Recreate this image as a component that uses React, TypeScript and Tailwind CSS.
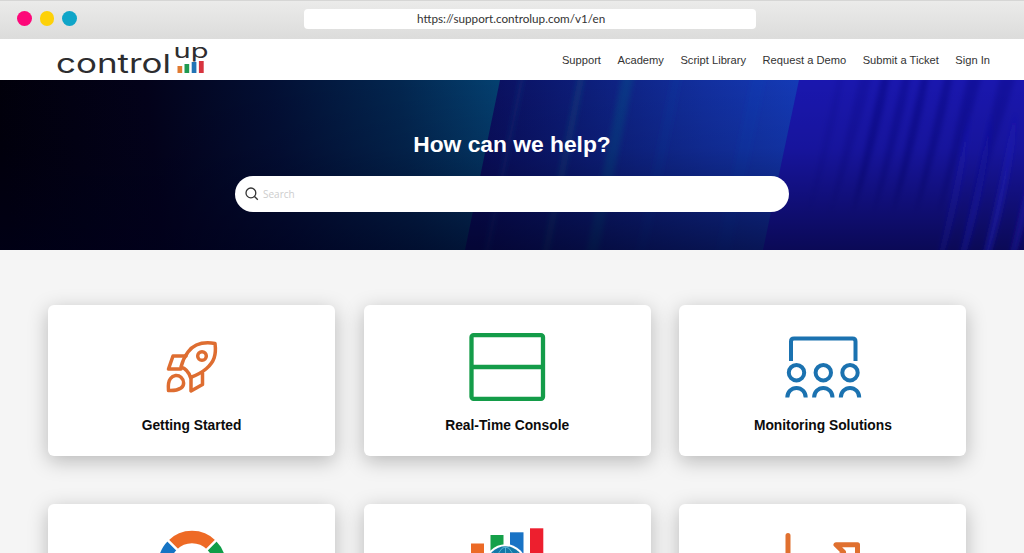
import type { ReactNode } from 'react'

const navLinks = ['Support', 'Academy', 'Script Library', 'Request a Demo', 'Submit a Ticket', 'Sign In']

const streaks = [
  { x: 520, w: 5, color: '#1c4a90', opacity: 0.2 },
  { x: 578, w: 7, color: '#146080', opacity: 0.28 },
  { x: 622, w: 12, color: '#126488', opacity: 0.28 },
  { x: 672, w: 10, color: '#1a48b0', opacity: 0.12 },
  { x: 752, w: 14, color: '#1c4cc4', opacity: 0.12 },
]

// dark folds hang from the top, light ones show in the lower right corner
const folds = [
  { x: 838, w: 6, o: 0.12 },
  { x: 860, w: 12, o: 0.18 },
  { x: 882, w: 8, o: 0.4 },
  { x: 903, w: 8, o: 0.3 },
  { x: 922, w: 7, o: 0.4 },
  { x: 945, w: 8, o: 0.35 },
  { x: 968, w: 14, o: 0.3 },
  { x: 1000, w: 16, o: 0.25 },
]

const highlights = [
  { x: 966, w: 5, o: 0.25 },
  { x: 988, w: 6, o: 0.35 },
  { x: 1012, w: 6, o: 0.5 },
  { x: 1038, w: 6, o: 0.4 },
]

function Logo() {
  return (
    <svg className="overflow-visible" width="156" height="41" viewBox="54 39 156 41" role="img" aria-label="ControlUp">
      <g fill="#2d2d2f" fontFamily="Inter, sans-serif">
        <text x="56" y="72.500" fontSize="26" textLength="115" lengthAdjust="spacingAndGlyphs">control</text>
        <text x="173.500" y="57.500" fontSize="18.500" textLength="35" lengthAdjust="spacingAndGlyphs">up</text>
      </g>
      <rect x="177.500" y="66" width="4.700" height="7" fill="#e07b32" />
      <rect x="184.500" y="64" width="4.700" height="9" fill="#1f9a50" />
      <rect x="191.700" y="62" width="4.700" height="11" fill="#2274b5" />
      <rect x="198.900" y="61" width="4.800" height="12" fill="#d8343f" />
    </svg>
  )
}

function HeroBackground() {
  return (
    <svg className="absolute inset-0 h-full w-full" viewBox="0 0 1024 170" preserveAspectRatio="none" aria-hidden="true">
      <defs>
        <linearGradient id="left" gradientUnits="userSpaceOnUse" x1="0" y1="60" x2="500" y2="0">
          <stop offset="0" stopColor="#01000a" />
          <stop offset="0.3" stopColor="#03021a" />
          <stop offset="0.55" stopColor="#030f34" />
          <stop offset="0.8" stopColor="#03264f" />
          <stop offset="1" stopColor="#044070" />
        </linearGradient>
        <linearGradient id="middle" gradientUnits="userSpaceOnUse" x1="480" y1="0" x2="800" y2="0">
          <stop offset="0" stopColor="#0a0e5c" />
          <stop offset="0.35" stopColor="#0d1f7c" />
          <stop offset="0.7" stopColor="#122f9e" />
          <stop offset="1" stopColor="#143ab6" />
        </linearGradient>
        <linearGradient id="shade" x1="0" y1="0" x2="0" y2="1">
          <stop offset="0" stopColor="#00001c" stopOpacity="0" />
          <stop offset="0.4" stopColor="#00001c" stopOpacity="0.12" />
          <stop offset="1" stopColor="#00001c" stopOpacity="0.6" />
        </linearGradient>
        <filter id="soft" x="-10%" y="-10%" width="120%" height="120%">
          <feGaussianBlur stdDeviation="2.500" />
        </filter>
        <clipPath id="right">
          <polygon points="799,0 1024,0 1024,170 763,170" />
        </clipPath>
      </defs>
      <rect width="1024" height="170" fill="url(#left)" />
      <polygon points="500,0 800,0 764,170 465,170" fill="url(#middle)" />
      <g filter="url(#soft)">
        {streaks.map((s) => (
          <polygon
            key={s.x}
            points={`${s.x},-4 ${s.x + s.w},-4 ${s.x + s.w - 36},174 ${s.x - 36},174`}
            fill={s.color}
            opacity={s.opacity}
          />
        ))}
      </g>
      <polygon points="799,0 1024,0 1024,170 763,170" fill="#1a17ae" />
      <g clipPath="url(#right)">
        <g filter="url(#soft)">
          {folds.map((f) => (
            <path
              key={f.x}
              d={`M${f.x} -4 h${f.w} Q${f.x - 6} 70 ${f.x - 30} 135 Q${f.x - 18} 70 ${f.x} -4`}
              fill="#0a0870"
              opacity={f.o}
            />
          ))}
        </g>
      </g>
      <rect width="1024" height="170" fill="url(#shade)" />
      <g clipPath="url(#right)">
        <g filter="url(#soft)">
          {highlights.map((h) => (
            <path
              key={h.x}
              d={`M${h.x + 4} 30 Q${h.x} 100 ${h.x - 22} 174 h${-h.w} Q${h.x - 10} 100 ${h.x + 4} 30`}
              fill="#211fc0"
              opacity={h.o}
            />
          ))}
        </g>
      </g>
    </svg>
  )
}

function RocketIcon() {
  return (
    <svg width="62" height="60" viewBox="161 337 62 60" fill="none" stroke="#de6d31" strokeWidth="3.500" strokeLinejoin="round" strokeLinecap="round">
      <path d="M215 343.500C203 341.500 194 344 188 352C185 356 182.500 361 181 367C185.500 368.500 189 372.500 190.500 377.500C197 375 202.500 372 206.500 368.500C214 362 216.500 355 215 343.500Z" />
      <circle cx="202" cy="356" r="4.300" />
      <path d="M186 356H173L168.500 369H181" />
      <path d="M202.500 373V384.500L191 391V377.500" />
      <path d="M168.500 390.500C168 385 168.500 381 170.500 378.500C173 375 178 374.500 181 377.300C184.500 380.500 184.500 385.500 181 388C178 390 173.500 390.800 168.500 390.500Z" />
    </svg>
  )
}

function ConsoleIcon() {
  return (
    <svg width="78" height="70" viewBox="468 332 78 70" fill="none" stroke="#149c49" strokeWidth="4.300">
      <rect x="471.500" y="335.200" width="71.500" height="63.600" rx="2" />
      <path d="M471.500 367H543" />
    </svg>
  )
}

function MonitoringIcon() {
  return (
    <svg width="80" height="66" viewBox="783 335 80 66" fill="none" stroke="#1b72b0" strokeWidth="4">
      <path d="M791 361V341.500Q791 338.500 794 338.500H852.500Q855.500 338.500 855.500 341.500V361" />
      {[796.5, 823.3, 850].map((x) => (
        <g key={x}>
          <circle cx={x} cy="372.700" r="7.700" />
          <path d={`M${x - 9.2} 397.500A9.200 9.600 0 0 1 ${x + 9.2} 397.500`} />
        </g>
      ))}
    </svg>
  )
}

function DonutIcon() {
  return (
    <svg width="70" height="70" viewBox="156.500 529 70 70" fill="none" strokeWidth="12.500">
      <g transform="rotate(-45 191.500 564.500)">
        <path d="M191.500 537A27.500 27.500 0 0 1 219 564.500" stroke="#ee6a25" />
        <path d="M219 564.500A27.500 27.500 0 0 1 191.500 592" stroke="#109d48" />
        <path d="M191.500 592A27.500 27.500 0 0 1 164 564.500" stroke="#ee6a25" />
        <path d="M164 564.500A27.500 27.500 0 0 1 191.500 537" stroke="#1674c4" />
        <path d="M191.500 529V600M156 564.500H227" stroke="#fff" strokeWidth="2.500" />
      </g>
    </svg>
  )
}

function GlobeChartIcon() {
  return (
    <svg width="78" height="68" viewBox="468 526 78 68">
      <rect x="471" y="543.500" width="13" height="50" fill="#ec6a26" />
      <rect x="490.500" y="535" width="13" height="50" fill="#15a049" />
      <rect x="510" y="532.300" width="13.500" height="50" fill="#1973c5" />
      <rect x="530" y="528.300" width="13.300" height="65" fill="#ed1f2e" />
      <circle cx="505.500" cy="565" r="20.800" fill="#fff" />
      <circle cx="505.500" cy="565" r="18.800" fill="#1478a8" />
      <g fill="none" stroke="#5cbcd8" strokeWidth="0.900">
        <ellipse cx="505.500" cy="565" rx="9" ry="18" />
        <path d="M505.500 547V583M493 553Q505.500 559 518 553M488 565H523" />
      </g>
    </svg>
  )
}

function ArrowIcon() {
  return (
    <svg width="80" height="66" viewBox="783 532 80 66" fill="none" stroke="#e0702f" strokeWidth="5" strokeLinejoin="round" strokeLinecap="round">
      <path d="M788 535.500V594H860" />
      <path d="M836 544.800H857.500V566L850 559L828 580L822 574L843.500 552Z" />
    </svg>
  )
}

function Card({ title, children }: { title?: string; children: ReactNode }) {
  return (
    <a href="#" className="flex h-[151px] flex-col items-center rounded-md bg-white shadow-[0_5px_20px_rgba(0,0,0,0.25)]">
      <div className="flex h-[112px] shrink-0 items-end justify-center pt-6">{children}</div>
      {title && <h2 className="pt-px text-[13.800px] leading-4 font-bold text-[#0c0c0c]">{title}</h2>}
    </a>
  )
}

export default function App() {
  return (
    <div className="h-[553px] w-full overflow-hidden bg-[#f5f5f5] font-['Liberation_Sans',Arial,sans-serif]">
      <div className="flex h-[39px] items-start border-t border-[#d6d6d5] bg-linear-to-b from-[#ebebea] to-[#dcdcdb] pl-[17px]">
        <div className="flex w-[287px] gap-[8px] pt-[10px]">
          <span className="size-[14.500px] rounded-full bg-[#fd0879]" />
          <span className="size-[14.500px] rounded-full bg-[#fdd108]" />
          <span className="size-[14.500px] rounded-full bg-[#0fa5c8]" />
        </div>
        <div className="mt-2 h-5 w-[452px] rounded-[4px] bg-white pl-[113px] font-['Lato',sans-serif] text-[11.700px] leading-[18px] whitespace-nowrap text-[#333]">
          https://support.controlup.com/v1/en
        </div>
      </div>

      <header className="flex h-[41px] items-center justify-between bg-white pr-[34px] pl-[54px]">
        <Logo />
        <nav className="flex gap-[16.500px] text-[11.150px] leading-4 text-[#333]">
          {navLinks.map((link) => (
            <a key={link} href="#">{link}</a>
          ))}
        </nav>
      </header>

      <section className="relative h-[170px]">
        <HeroBackground />
        <div className="relative flex flex-col items-center pt-[50px]">
          <h1 className="text-[22.800px] leading-7 font-bold text-white">How can we help?</h1>
          <div className="mt-[18px] flex h-9 w-[554px] items-center rounded-full bg-white pl-[10px]">
            <svg width="14" height="14" viewBox="0 0 14 14" fill="none" stroke="#333" strokeWidth="1.300">
              <circle cx="5.900" cy="5.900" r="4.900" />
              <path d="M9.500 9.500L12.800 12.800" />
            </svg>
            <input
              className="ml-1 flex-1 font-['Open_Sans',sans-serif] text-[10px] outline-none placeholder:text-[#cdcdcd]"
              placeholder="Search"
            />
          </div>
        </div>
      </section>

      <main className="grid grid-cols-[287px_287px_287px] gap-x-[28.700px] gap-y-[48px] pt-[55px] pl-12">
        <Card title="Getting Started"><div className="mb-5"><RocketIcon /></div></Card>
        <Card title="Real-Time Console"><div className="mb-[15px]"><ConsoleIcon /></div></Card>
        <Card title="Monitoring Solutions"><div className="mb-4"><MonitoringIcon /></div></Card>
        <Card><div className="mb-[17px]"><DonutIcon /></div></Card>
        <Card><div className="mb-[22px]"><GlobeChartIcon /></div></Card>
        <Card><div className="mb-[18px]"><ArrowIcon /></div></Card>
      </main>
    </div>
  )
}
